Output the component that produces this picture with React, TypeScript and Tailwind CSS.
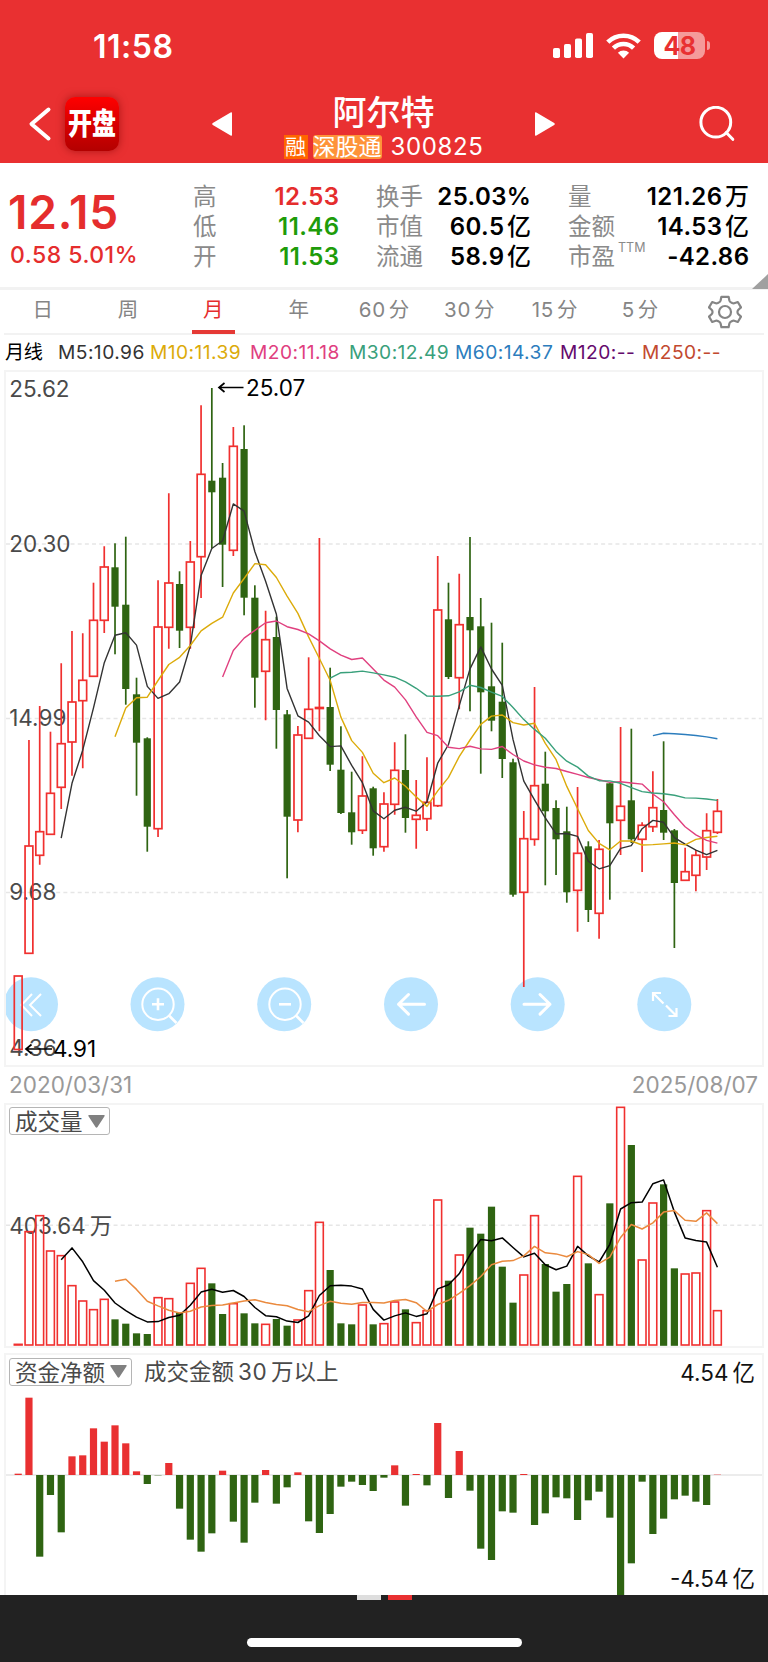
import { useState } from 'react';

type Candle = [high: number, top: number, bottom: number, low: number, up: 0 | 1]

// y positions inside the price panel
const CANDLES: Candle[] = [
  [606, 606, 679.5, 679.5, 1], [370, 476, 583.3, 583.3, 1], [336, 461.7, 485.3, 494.7, 1], [361.7, 423.3, 464.3, 464.3, 1],
  [293.3, 373.7, 417.3, 439, 1], [261, 332, 372, 405.7, 1], [263.3, 310.3, 330.7, 398.3, 1], [212.7, 250.3, 306.3, 306.3, 1],
  [176.3, 197, 250.3, 263, 1], [173.3, 197.3, 236.7, 284.3, 0], [166.7, 234.7, 319, 334.7, 0], [307.7, 324.3, 372.7, 425.7, 0],
  [367.3, 368.3, 456.7, 481.7, 0], [210.3, 257, 458.7, 467, 1], [123.3, 213, 257.3, 278.7, 1], [201.3, 214, 260.7, 278, 0],
  [171, 192, 257.3, 278.7, 1], [35.3, 104.3, 186.7, 228, 1], [18, 110.7, 122.3, 178.3, 0], [93, 107.7, 174.7, 217, 0],
  [57, 76.3, 180.3, 186, 1], [55.3, 79, 227.7, 245.3, 0], [215.3, 227.7, 307.7, 337.7, 0], [240.7, 269.7, 301.3, 350.3, 1],
  [246.7, 267, 340, 378.7, 0], [340, 344.3, 446.7, 508.3, 0], [356, 365, 450, 462.3, 1], [287.3, 339.3, 368.3, 368.3, 1],
  [168, 337.5, 338.5, 361.3, 1], [297.7, 337, 394.7, 401, 0], [356.3, 399.7, 443, 444, 0], [401.7, 442.3, 462.3, 474.7, 0],
  [386.3, 426, 460.3, 464, 1], [416.7, 418.3, 478.3, 485.7, 0], [422.3, 434, 476.7, 481.7, 1], [372.3, 400.3, 434.3, 444.7, 1],
  [364.3, 400, 448, 462.7, 0], [410, 445.3, 449.3, 478.7, 1], [387.3, 432.3, 448.7, 461, 1], [186, 240, 435.7, 437, 1],
  [212.7, 249.3, 307, 309, 0], [203.7, 254.7, 307.7, 339.3, 1], [167, 247, 260.3, 341.3, 0], [228, 256.3, 322.3, 403.7, 0],
  [252.7, 316.3, 350.7, 361.3, 0], [272.7, 331.7, 389, 408, 0], [388.7, 392.3, 524.7, 526.7, 0], [441, 468.7, 522.3, 617, 1],
  [317, 415.7, 469.3, 475.7, 1], [381.7, 413.7, 441.3, 515.3, 0], [430.3, 438, 469.3, 505, 0], [436.7, 461.3, 522.3, 532.7, 0],
  [417, 483.3, 520.3, 561.7, 1], [471.3, 476.3, 540, 552, 0], [470, 479.3, 543.3, 568.7, 1], [413.3, 413.3, 453.3, 529.7, 0],
  [357, 436.3, 450.3, 485, 1], [358.7, 430.3, 469.3, 473, 0], [452.3, 455.3, 469.3, 502, 1], [401.3, 437.7, 456.7, 462, 1],
  [371.3, 440, 462.7, 470, 0], [459, 460.3, 513, 578, 0], [477.7, 501.7, 510.3, 511, 1], [480, 485.3, 505.3, 521.3, 1],
  [443.3, 460.7, 487, 500, 1], [429, 441.3, 462.3, 464, 1],
];

const VOLUMES = [
  2, 340, 388, 282, 268, 178, 132, 106, 137, 77, 64, 35, 33, 142, 139, 97, 185, 230, 185, 93, 124, 95, 65, 62, 78, 58, 75, 163,
  368, 225, 65, 62, 120, 62, 64, 129, 107, 67, 103, 435, 193, 270, 352, 334, 415, 235, 127, 210, 388, 243, 160, 183, 506, 245,
  151, 425, 713, 600, 255, 426, 482, 230, 213, 216, 403, 103,
];

const FLOWS = [
  4, 232, -245, -60, -172, 56, 59, 140, 100, 149, 95, 11, -27, -1, 36, -101, -194, -230, -175, 13, -140, -203, -83, 15, -86,
  -37, 8, -139, -174, -117, -35, -20, -30, -48, -8, 29, -92, 3, -31, 156, -69, 72, -47, -221, -255, -109, -113, 3, -150, -115,
  -67, -70, -135, -76, -50, -128, -361, -265, -20, -177, -131, -73, -62, -80, -90, 1,
];

const RED = '#f0302f';
const GREEN = '#2f6412';
const FONT = 'Inter, "Noto Sans CJK SC", sans-serif';

const xAt = (i: number) => 18.2 + i * 10.757;

function average(values: number[], n: number) {
  const points: string[] = [];
  for (let i = n - 1; i < values.length; i++) {
    const sum = values.slice(i - n + 1, i + 1).reduce((a, b) => a + b, 0);
    points.push(`${xAt(i).toFixed(1)},${(sum / n).toFixed(1)}`);
  }
  return points.join(' ');
}

function StatusBar() {
  return (
    <div className="flex h-[90px] items-center pt-px pl-[93px] pr-[58px] text-white">
      <span className="mt-[3px] text-[32px] leading-none font-semibold tracking-[0.5px]">11:58</span>
      <svg className="ml-auto" width="40" height="27" viewBox="0 0 40 27" fill="currentColor">
        <rect x="0" y="16" width="7" height="10" rx="1.8" />
        <rect x="11" y="12" width="7" height="14" rx="1.8" />
        <rect x="22" y="6.5" width="7" height="19.5" rx="1.8" />
        <rect x="33" y="1" width="7" height="25" rx="1.8" />
      </svg>
      <svg className="ml-[13px]" width="35" height="26" viewBox="0 0 35 26" fill="none" stroke="currentColor" strokeWidth="4.6">
        <path d="M1.8 9.2a22.4 22.4 0 0 1 31.4 0" />
        <path d="M7.4 15.2a14.4 14.4 0 0 1 20.2 0" />
        <path d="M17.5 25.5 11.9 19.7a8 8 0 0 1 11.2 0z" fill="currentColor" stroke="none" />
      </svg>
      <div className="ml-[13px] flex items-center">
        <div className="flex h-[27px] w-[51px] items-center justify-center rounded-[8px] bg-gradient-to-r from-white from-48% to-[#f59a9a] to-48% pt-[2px] text-[25px] leading-none font-bold tracking-[-0.5px] text-[#e93031]">
          48
        </div>
        <div className="ml-[2px] h-[9px] w-[3px] rounded-r-full bg-[#f59a9a]" />
      </div>
    </div>
  );
}

function TitleBar() {
  return (
    <div className="flex h-[73px] items-center pr-8 pb-[5px] pl-7 text-white">
      <svg width="25" height="36" viewBox="0 0 25 36" fill="none" stroke="currentColor" strokeWidth="4" strokeLinecap="round" strokeLinejoin="round">
        <path d="M20.500 3.500 3.500 18 20.500 32.500" />
      </svg>
      <div className="ml-3 flex h-[54px] w-[54px] items-center justify-center rounded-[10px] bg-gradient-to-b from-[#ff0000] to-[#b30000] shadow-[0_0_8px_rgba(120,0,0,0.55)]">
        <span className="scale-y-[1.22] text-[24px] leading-none font-black">开盘</span>
      </div>
      <svg className="ml-[93px]" width="20" height="24" viewBox="0 0 20 24" fill="currentColor">
        <path d="M20 1.2v21.6q0 1.6-1.4.7L.8 13q-1.2-1 0-2L18.6.5Q20-.4 20 1.2z" />
      </svg>
      <div className="flex flex-1 flex-col items-center pt-px">
        <div className="text-[34px] leading-[44px] font-medium">阿尔特</div>
        <div className="flex h-6 items-center text-[23px] leading-6">
          <span className="flex h-6 w-6 items-center justify-center bg-[#ff6600] text-[21px]">融</span>
          <span className="ml-[5px] flex h-6 w-[69px] items-center justify-center rounded-[3px] bg-[#fe9339]">深股通</span>
          <span className="ml-[9px] text-[24px] tracking-[0.6px]">300825</span>
        </div>
      </div>
      <svg width="20" height="24" viewBox="0 0 20 24" fill="currentColor">
        <path d="M0 1.2v21.6q0 1.6 1.4.7L19.2 13q1.2-1 0-2L1.4.5Q0-.4 0 1.2z" />
      </svg>
      <svg className="ml-[144px]" width="37" height="36" viewBox="0 0 37 36" fill="none" stroke="currentColor" strokeWidth="3" strokeLinecap="round">
        <circle cx="16.8" cy="16.2" r="14.9" />
        <path d="M27.2 26.5 33.800 33.300" />
      </svg>
    </div>
  );
}

interface StatProps {
  label: string
  value: string
  unit?: string
  sup?: string
  color?: string
}

function Stat({ label, value, unit, sup, color = 'text-black' }: StatProps) {
  return (
    <div className="flex h-[30px] items-center justify-between leading-[30px]">
      <span className="flex text-[23.5px] text-[#8a8a8a]">
        {label}
        {sup && <sup className="top-0 -mt-[9px] ml-[3px] text-[12.5px] leading-[30px]">{sup}</sup>}
      </span>
      <span className={`flex text-[24px] font-semibold ${color}`}>
        <span className="-mr-[0.4px] tracking-[0.4px]">{value}</span>
        {unit && <span className="ml-[3px] font-medium">{unit}</span>}
      </span>
    </div>
  );
}

function Quote() {
  return (
    <div className="relative flex h-[124px] bg-white pt-[19px]">
      <div className="w-[193px] pl-2 text-[#e52d2d]">
        <div className="text-[46px] leading-[60px] font-semibold tracking-[0.8px]">12.15</div>
        <div className="pl-0.5 text-[23px] leading-[26px] font-medium tracking-[0.5px]">0.58 5.01%</div>
      </div>
      <div className="w-[146px]">
        <Stat label="高" value="12.53" color="text-[#e52d2d]" />
        <Stat label="低" value="11.46" color="text-[#1e9c0a]" />
        <Stat label="开" value="11.53" color="text-[#1e9c0a]" />
      </div>
      <div className="ml-[37px] w-[155px]">
        <Stat label="换手" value="25.03%" />
        <Stat label="市值" value="60.5" unit="亿" />
        <Stat label="流通" value="58.9" unit="亿" />
      </div>
      <div className="ml-[37px] w-[181px]">
        <Stat label="量" value="121.26" unit="万" />
        <Stat label="金额" value="14.53" unit="亿" />
        <Stat label="市盈" sup="TTM" value="-42.86" />
      </div>
      <svg className="absolute right-0 -bottom-[2px]" width="16" height="15" viewBox="0 0 16 15">
        <path d="M16 0v15H0z" fill="#a0a0a0" />
      </svg>
    </div>
  );
}

const PERIODS = [
  { unit: '日' },
  { unit: '周' },
  { unit: '月' },
  { unit: '年' },
  { num: '60', unit: '分' },
  { num: '30', unit: '分' },
  { num: '15', unit: '分' },
  { num: '5', unit: '分' },
];

function PeriodTabs() {
  const [active, setActive] = useState(2);
  return (
    <div>
      <div className="grid h-[43px] grid-cols-9">
        {PERIODS.map((p, i) => (
          <button key={i} onClick={() => setActive(i)} className="flex cursor-pointer flex-col items-center">
            <span className={`flex h-10 text-[20.5px] leading-[40px] ${active === i ? 'text-[#e52d2d]' : 'text-[#858585]'}`}>
              {p.num && <span className="mr-[3px] tracking-[0.7px]">{p.num}</span>}
              {p.unit}
            </span>
            {active === i && <span className="h-1 w-[43px] shrink-0 bg-[#e53935]" />}
          </button>
        ))}
        <button className="flex cursor-pointer items-center justify-center text-[#858585]">
          <svg width="34" height="34" viewBox="0 0 34 34" fill="none" stroke="currentColor" strokeWidth="2.2" strokeLinejoin="round">
            <path d="M13.4 1.8h7.2l.8 3.7q.3 1 1.2 1.6l1.6.9q1 .5 2 .2l3.6-1.2 3.2 5.4-2.8 2.6q-.7.8-.7 1.8v.4q0 1 .7 1.8l2.8 2.6-3.2 5.4-3.600-1.200q-1-.3-2 .2l-1.600.9q-.9.6-1.200 1.600l-.8 3.700h-7.200l-.8-3.700q-.3-1-1.200-1.600l-1.600-.9q-1-.5-2-.2l-3.600 1.200-3.200-5.400 2.800-2.600q.7-.8.7-1.800v-.4q0-1-.7-1.800l-2.800-2.600 3.200-5.400 3.600 1.200q1 .3 2-.2l1.600-.9q.9-.6 1.200-1.600z" />
            <circle cx="17" cy="17" r="6" />
          </svg>
        </button>
      </div>
      <div className="mx-1 h-[2px] bg-[#f2f2f2]" />
    </div>
  );
}

function Legend() {
  return (
    <div className="flex h-[35px] items-center pl-[5px] text-[19.2px] leading-[35px] tracking-[0.45px] whitespace-nowrap">
      <span className="w-[53px] tracking-[-0.5px] text-black">月线</span>
      <span className="w-[92px] text-[#333333]">M5:10.96</span>
      <span className="w-[100px] text-[#dcab0a]">M10:11.39</span>
      <span className="w-[99px] text-[#e0407f]">M20:11.18</span>
      <span className="w-[106px] text-[#39a07b]">M30:12.49</span>
      <span className="w-[105px] text-[#2c7dbd]">M60:14.37</span>
      <span className="w-[82px] text-[#650a6d]">M120:--</span>
      <span className="text-[#c2492f]">M250:--</span>
    </div>
  );
}

function Grid({ y }: { y: number }) {
  return <path d={`M6 ${y}H762`} stroke="#e6e6e6" strokeWidth="1.5" strokeDasharray="4 3.17" />;
}

function Controls() {
  return (
    <g fill="none" stroke="#fff" strokeWidth="2">
      <g fill="#b9e4ff" stroke="none">
        {[31, 157.5, 284.2, 411, 537.7, 664.3].map(cx => <circle key={cx} cx={cx} cy="634.3" r="27" />)}
      </g>
      <path d="M32 624 21.5 635 32 646M41 624 30 635 41 646" />
      <circle cx="158" cy="634.3" r="15.7" />
      <path d="M169 645.5l7.5 7.5" strokeWidth="2.6" />
      <path d="M152 634.3h12M158 628.3v12" strokeWidth="2.6" />
      <circle cx="285" cy="634.3" r="15.7" />
      <path d="M296 645.5l7.5 7.5" strokeWidth="2.6" />
      <path d="M279 634.3h12" strokeWidth="2.6" />
      <path d="M424.5 634.3H398.5M408.5 624.5 398.5 634.3l10 9.8" strokeWidth="3" strokeLinecap="round" strokeLinejoin="round" />
      <path d="M524 634.3h26M540 624.5l10 9.8-10 9.8" strokeWidth="3" strokeLinecap="round" strokeLinejoin="round" />
      <path d="M653 631v-8h8M653 623l10.5 10.5M676.5 638v8h-8M676.5 646 666 635.5" strokeWidth="2.2" />
    </g>
  );
}

function PriceChart() {
  const closes = CANDLES.map(c => (c[4] ? c[1] : c[2]));
  return (
    <div className="ml-1 h-[697px] w-[760px] border-2 border-[#f4f4f4]">
      <svg className="block" width="756" height="693" viewBox="6 2 756 693" fontFamily={FONT}>
        <Grid y={174} />
        <Grid y={348.4} />
        <Grid y={522.6} />
        <Controls />
        <g fontSize="22.5" fill="#4a4a4a">
          <text x="9.2" y="27.3">25.62</text>
          <text x="9.2" y="181.7">20.30</text>
          <text x="9.2" y="356.3">14.99</text>
          <text x="9.2" y="530.3">9.68</text>
          <text x="9.2" y="685.7">4.36</text>
        </g>
        {CANDLES.map(([high, top, bottom, low, up], i) => {
          const x = xAt(i);
          return up ? (
            <g key={i} fill="none" stroke={RED} strokeWidth="1.7">
              <path d={`M${x} ${high}V${top}M${x} ${bottom}V${low}`} />
              <rect x={x - 3.9} y={top} width="7.8" height={bottom - top} />
            </g>
          ) : (
            <g key={i} fill={GREEN}>
              <rect x={x - 0.85} y={high} width="1.7" height={low - high} />
              <rect x={x - 3.6} y={top} width="7.2" height={bottom - top} />
            </g>
          );
        })}
        <g fill="none" strokeWidth="1.4" strokeLinejoin="round">
          <polyline points={average(closes, 5)} stroke="#333333" />
          <polyline points={average(closes, 10)} stroke="#dcab0a" />
          <polyline points={average(closes, 20)} stroke="#e0407f" />
          <polyline points={average(closes, 30)} stroke="#39a07b" />
          <polyline points={average(closes, 60)} stroke="#2c7dbd" />
        </g>
        <g fontSize="22.5" fill="#000">
          <path d="M219 17.5H243.5M224.5 13 219 17.5l5.5 4.5" fill="none" stroke="#000" strokeWidth="1.7" />
          <text x="246" y="25.7">25.07</text>
          <path d="M26 679H52M31.5 674.5 26 679l5.5 4.5" fill="none" stroke="#000" strokeWidth="1.7" />
          <text x="53" y="687.3">4.91</text>
        </g>
      </svg>
    </div>
  );
}

function Picker({ label, className }: { label: string; className: string }) {
  return (
    <button className={`flex h-7 cursor-pointer items-center justify-between rounded-[3px] border border-[#b5b5b5] pr-1 pl-[5px] text-[22.5px] leading-7 text-[#4a4a4a] ${className}`}>
      <span className="mt-[2px]">{label}</span>
      <svg width="17" height="13" viewBox="0 0 17 13" fill="#808080">
        <path d="M1 0h15q1.3 0 .5 1.2L9.5 12q-1 1.5-2 0L.5 1.2Q-.3 0 1 0z" />
      </svg>
    </button>
  );
}

function VolumeChart() {
  const tops = VOLUMES.map(v => 255 - v / 3);
  return (
    <div className="relative ml-1 h-[245px] w-[760px] border-2 border-[#f4f4f4]">
      <svg className="block" width="756" height="241" viewBox="6 15 756 241" fontFamily={FONT}>
        <Grid y={135.3} />
        <text x="9.2" y="143.6" fontSize="22.5" fill="#4a4a4a">403.64<tspan dx="4">万</tspan></text>
        {tops.map((y, i) =>
          CANDLES[i][4] ? (
            <rect key={i} x={xAt(i) - 3.9} y={y} width="7.8" height={255 - y} fill="none" stroke={RED} strokeWidth="1.6" />
          ) : (
            <rect key={i} x={xAt(i) - 3.6} y={y} width="7.2" height={255.8 - y} fill={GREEN} />
          )
        )}
        <g fill="none" strokeWidth="1.5" strokeLinejoin="round">
          <polyline points={average(tops, 5)} stroke="#000000" />
          <polyline points={average(tops, 10)} stroke="#ea8a3e" />
        </g>
      </svg>
      <Picker label="成交量" className="absolute top-[2px] left-[3px] w-[101px]" />
    </div>
  );
}

function FlowChart() {
  return (
    <div className="relative ml-1 h-[242px] w-[760px] border-2 border-b-0 border-[#f4f4f4]">
      <svg className="block" width="756" height="240" viewBox="6 5 756 240" fontFamily={FONT}>
        <path d="M6 125H762" stroke="#ececec" strokeWidth="2" />
        {FLOWS.map((v, i) => (
          <rect key={i} x={xAt(i) - 3.6} y={v > 0 ? 125 - v / 3 : 125} width="7.2" height={Math.abs(v) / 3} fill={v > 0 ? '#e93031' : GREEN} />
        ))}
        <g fontSize="22.5" fill="#111" textAnchor="end">
          <text x="755" y="30.7">4.54<tspan dx="4">亿</tspan></text>
          <text x="755" y="236.7">-4.54<tspan dx="4">亿</tspan></text>
        </g>
      </svg>
      <div className="absolute top-[2px] left-[3px] flex items-center text-[22.5px] leading-7 text-[#4a4a4a]">
        <Picker label="资金净额" className="w-[123px]" />
        <span className="mt-px ml-3">成交金额<span className="mx-[4px] tracking-[0.5px]">30</span>万以上</span>
      </div>
    </div>
  );
}

export default function App() {
  return (
    <div className="flex h-[1662px] w-[768px] flex-col overflow-hidden bg-white font-[Inter,'Noto_Sans_CJK_SC',sans-serif]">
      <header className="h-[163px] bg-[#e93031]">
        <StatusBar />
        <TitleBar />
      </header>
      <Quote />
      <div className="h-[3px] bg-[#f2f2f2]" />
      <PeriodTabs />
      <Legend />
      <PriceChart />
      <div className="flex h-9 items-center justify-between pr-[10px] pl-[9px] text-[22.5px] text-[#999999]">
        <span>2020/03/31</span>
        <span>2025/08/07</span>
      </div>
      <VolumeChart />
      <div className="h-[5px]" />
      <FlowChart />
      <footer className="flex h-[67px] flex-col items-center bg-[#222222]">
        <div className="flex gap-[7px]">
          <span className="h-[5px] w-6 bg-[#dedede]" />
          <span className="h-[5px] w-6 bg-[#e93031]" />
        </div>
        <div className="mt-[38px] h-[9px] w-[275px] rounded-full bg-white" />
      </footer>
    </div>
  );
}
